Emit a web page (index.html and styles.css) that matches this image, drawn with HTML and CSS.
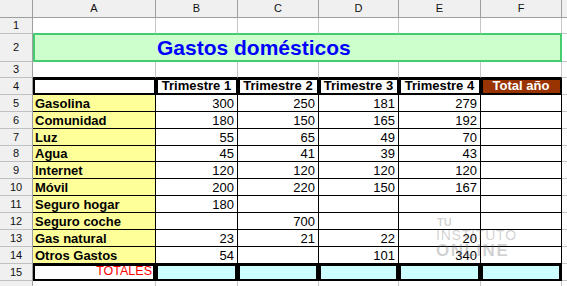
FILE: index.html
```html
<!DOCTYPE html>
<html lang="es">
<head>
<meta charset="utf-8">
<title>Gastos domésticos</title>
<link rel="stylesheet" href="styles.css">
</head>
<body>
<div class="sheet">
<table class="grid">
<colgroup>
<col class="c-rh"><col class="c-a"><col class="c-b"><col class="c-c"><col class="c-d"><col class="c-e"><col class="c-f"><col class="c-g">
</colgroup>
<tr class="r-colhead">
<td class="corner"></td><td class="ch">A</td><td class="ch">B</td><td class="ch">C</td><td class="ch">D</td><td class="ch">E</td><td class="ch">F</td><td class="ch"></td>
</tr>
<tr class="r-16">
<td class="rh">1</td><td class="gb"></td><td class="gb"></td><td class="gb"></td><td class="gb"></td><td class="gb"></td><td class="gb"></td><td></td>
</tr>
<tr class="r-28">
<td class="rh">2</td><td class="title" colspan="6">Gastos domésticos</td><td></td>
</tr>
<tr class="r-16">
<td class="rh">3</td><td class="kb"></td><td class="kb"></td><td class="kb"></td><td class="kb"></td><td class="kb"></td><td class="kb"></td><td></td>
</tr>
<tr class="r-17">
<td class="rh">4</td><td class="hd"></td><td class="hd">Trimestre 1</td><td class="hd">Trimestre 2</td><td class="hd">Trimestre 3</td><td class="hd">Trimestre 4</td><td class="hd total">Total año</td><td></td>
</tr>
<tr class="r-17">
<td class="rh">5</td><td class="lbl">Gasolina</td><td class="num">300</td><td class="num">250</td><td class="num">181</td><td class="num">279</td><td class="num"></td><td></td>
</tr>
<tr class="r-17">
<td class="rh">6</td><td class="lbl">Comunidad</td><td class="num">180</td><td class="num">150</td><td class="num">165</td><td class="num">192</td><td class="num"></td><td></td>
</tr>
<tr class="r-17">
<td class="rh">7</td><td class="lbl">Luz</td><td class="num">55</td><td class="num">65</td><td class="num">49</td><td class="num">70</td><td class="num"></td><td></td>
</tr>
<tr class="r-16">
<td class="rh">8</td><td class="lbl">Agua</td><td class="num">45</td><td class="num">41</td><td class="num">39</td><td class="num">43</td><td class="num"></td><td></td>
</tr>
<tr class="r-17">
<td class="rh">9</td><td class="lbl">Internet</td><td class="num">120</td><td class="num">120</td><td class="num">120</td><td class="num">120</td><td class="num"></td><td></td>
</tr>
<tr class="r-17">
<td class="rh">10</td><td class="lbl">Móvil</td><td class="num">200</td><td class="num">220</td><td class="num">150</td><td class="num">167</td><td class="num"></td><td></td>
</tr>
<tr class="r-17">
<td class="rh">11</td><td class="lbl">Seguro hogar</td><td class="num">180</td><td class="num"></td><td class="num"></td><td class="num"></td><td class="num"></td><td></td>
</tr>
<tr class="r-17">
<td class="rh">12</td><td class="lbl">Seguro coche</td><td class="num"></td><td class="num">700</td><td class="num"></td><td class="num"></td><td class="num"></td><td></td>
</tr>
<tr class="r-17">
<td class="rh">13</td><td class="lbl">Gas natural</td><td class="num">23</td><td class="num">21</td><td class="num">22</td><td class="num">20</td><td class="num"></td><td></td>
</tr>
<tr class="r-17">
<td class="rh">14</td><td class="lbl">Otros Gastos</td><td class="num">54</td><td class="num"></td><td class="num">101</td><td class="num">340</td><td class="num"></td><td></td>
</tr>
<tr class="r-17">
<td class="rh">15</td><td class="tot-lbl">TOTALES</td><td class="tot"></td><td class="tot"></td><td class="tot"></td><td class="tot"></td><td class="tot"></td><td></td>
</tr>
<tr class="r-16">
<td class="rh"></td><td></td><td></td><td></td><td></td><td></td><td></td><td></td>
</tr>
</table>
<div class="watermark">
<div class="wm-tu">TU</div>
<div class="wm-inst">INSTITUTO</div>
<div class="wm-online">ONLINE</div>
</div>
</div>
</body>
</html>
```
FILE: styles.css
```css
html, body {
  margin: 0;
  padding: 0;
  background: #ffffff;
}

body {
  font-family: "Liberation Sans", Arial, sans-serif;
  color: #000;
}

.sheet {
  position: relative;
  width: 567px;
  height: 286px;
  overflow: hidden;
}

.grid {
  border-collapse: separate;
  border-spacing: 0;
  table-layout: fixed;
  width: 612px;
}

.c-rh { width: 33px; }
.c-a { width: 123px; }
.c-b { width: 82px; }
.c-c { width: 81px; }
.c-d { width: 80px; }
.c-e { width: 82px; }
.c-f { width: 81px; }
.c-g { width: 50px; }

.grid td {
  padding: 0;
  border-right: 1px solid #c6c6c6;
  border-bottom: 1px solid #c6c6c6;
  box-sizing: border-box;
  font-size: 13px;
  line-height: 15px;
  white-space: nowrap;
  overflow: hidden;
  vertical-align: bottom;
}

.r-colhead { height: 18px; }
.r-16 { height: 16px; }
.r-17 { height: 17px; }
.r-28 { height: 28px; }

.grid .corner,
.grid .ch {
  background: #f0f0f0;
  border-right-color: #9e9e9e;
  border-bottom-color: #9e9e9e;
  text-align: center;
  vertical-align: middle;
  font-size: 11px;
  line-height: 13px;
  color: #111;
}

.grid .rh {
  background: #f0f0f0;
  border-right-color: #9e9e9e;
  border-bottom-color: #c0c0c0;
  text-align: center;
  vertical-align: middle;
  font-size: 11px;
  line-height: 13px;
  color: #111;
}

.grid .gb {
  border-bottom-color: #45cc70;
}

.grid .kb {
  border-bottom-color: #000;
}

.grid .title {
  background: #ccffcc;
  border-right-color: #45cc70;
  border-bottom-color: #45cc70;
  box-shadow: inset 2px 1px 0 #45cc70, inset -1px -1px 0 #45cc70;
  color: #0000ff;
  font-weight: bold;
  font-size: 21px;
  line-height: 24px;
  vertical-align: middle;
  padding-left: 124px;
}

.grid .hd {
  background: #fff;
  border-right-color: #000;
  border-bottom-color: #000;
  box-shadow: inset 2px 2px 0 #000, inset -1px -1px 0 #000;
  font-weight: bold;
  text-align: center;
  padding-bottom: 1px;
}

.grid .total {
  background: #993300;
  color: #fff;
}

.grid .lbl {
  background: #ffff99;
  border-right-color: #000;
  border-bottom-color: #000;
  font-weight: bold;
  padding-left: 2px;
}

.grid .num {
  border-right-color: #000;
  border-bottom-color: #000;
  text-align: right;
  padding-right: 3px;
}

.grid .tot-lbl,
.grid .tot {
  border-right-color: #000;
  border-bottom-color: #000;
  box-shadow: inset 2px 2px 0 #000, inset -2px -1px 0 #000;
}

.grid .tot-lbl {
  background: #fff;
  color: #ff0000;
  text-align: right;
  font-size: 12.5px;
  padding-right: 3px;
  padding-bottom: 1px;
}

.grid .tot {
  background: #ccffff;
}

.watermark {
  position: absolute;
  left: 436px;
  top: 217px;
  color: rgba(110, 110, 110, 0.32);
  font-family: "Liberation Sans", Arial, sans-serif;
  line-height: 1;
}

.wm-tu {
  font-size: 11px;
  font-weight: bold;
  padding-left: 1px;
}

.wm-inst {
  font-size: 14px;
  letter-spacing: 0.8px;
  margin-top: 0;
}

.wm-online {
  font-size: 17px;
  font-weight: bold;
  letter-spacing: 1.5px;
}
```
